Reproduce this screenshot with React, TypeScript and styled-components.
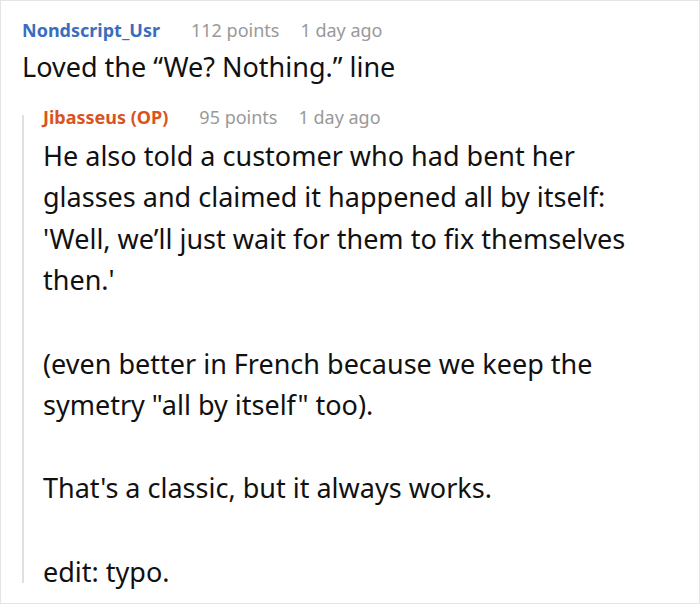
import styled, { createGlobalStyle } from 'styled-components'

const GlobalStyle = createGlobalStyle`
  html, body {
    margin: 0;
    padding: 0;
    background: #fff;
  }
  body {
    font-family: 'Noto Sans', 'Open Sans', sans-serif;
    color: #111;
  }
`

const Frame = styled.div`
  box-sizing: border-box;
  width: 700px;
  height: 604px;
  border: 1px solid #e4e4e4;
  padding: 18px 38px 0 21px;
  overflow: hidden;
`

const Meta = styled.div`
  display: flex;
  align-items: baseline;
  gap: 21px;
  font-size: 18px;
  line-height: 22px;
`

const Author = styled.span<{ $op?: boolean }>`
  font-weight: 700;
  margin-right: 10px;
  color: ${(p) => (p.$op ? '#d9531e' : '#3a6ebd')};
`

const Muted = styled.span`
  color: #999;
`

const Body = styled.div<{ $gap: number }>`
  margin-top: ${(p) => p.$gap}px;
  font-size: 27px;
  line-height: 41.6px;

  & p {
    margin: 0;
  }
  & p + p {
    margin-top: 41.6px;
  }
`

const Reply = styled.div`
  position: relative;
  margin-top: 18px;
  padding-left: 21px;

  &::before {
    content: '';
    position: absolute;
    left: 0;
    top: 9px;
    bottom: 9px;
    width: 2px;
    background: #e0e0e0;
  }
`

type CommentProps = {
  author: string
  points: number
  op?: boolean
}

const Header = ({ author, points, op }: CommentProps) => (
  <Meta>
    <Author $op={op}>{author}</Author>
    <Muted>{points} points</Muted>
    <Muted>1 day ago</Muted>
  </Meta>
)

export default function App() {
  return (
    <>
      <GlobalStyle />
      <Frame>
        <Header author="Nondscript_Usr" points={112} />
        <Body $gap={5}>
          <p>Loved the “We? Nothing.” line</p>
        </Body>
        <Reply>
          <Header author="Jibasseus (OP)" points={95} op />
          <Body $gap={7}>
            <p>
              He also told a customer who had bent her glasses and claimed it happened all by itself:
              'Well, we’ll just wait for them to fix themselves then.'
            </p>
            <p>(even better in French because we keep the symetry "all by itself" too).</p>
            <p>That's a classic, but it always works.</p>
            <p>edit: typo.</p>
          </Body>
        </Reply>
      </Frame>
    </>
  )
}
